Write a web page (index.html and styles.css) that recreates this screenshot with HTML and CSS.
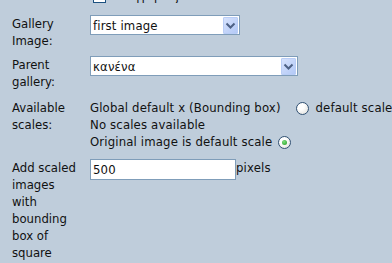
FILE: index.html
```html
<!doctype html>
<html>
<head>
    <meta charset="UTF-8">
    <title>Gallery image</title>
    <link rel="stylesheet" href="styles.css">
</head>
<body>
<div class="top">
    <span class="check"></span><span class="top_text">κατηγορίες</span>
</div>
<table class="form">
    <tr>
        <td class="label">Gallery Image:</td>
        <td>
            <div class="select sel_short">
                <span class="select_text">first image</span>
                <span class="select_btn"><svg width="15" height="17" viewBox="0 0 15 17"><polyline points="3.5,6.5 7.5,10.5 11.5,6.5" fill="none" stroke="#4d6185" stroke-width="2"/></svg></span>
            </div>
        </td>
    </tr>
    <tr class="row_parent">
        <td class="label">Parent gallery:</td>
        <td>
            <div class="select sel_long">
                <span class="select_text">κανένα</span>
                <span class="select_btn"><svg width="15" height="17" viewBox="0 0 15 17"><polyline points="3.5,6.5 7.5,10.5 11.5,6.5" fill="none" stroke="#4d6185" stroke-width="2"/></svg></span>
            </div>
        </td>
    </tr>
    <tr>
        <td class="label">Available scales:</td>
        <td class="scales">
            <div class="line">Global default x (Bounding box) <span class="radio"></span>default scale</div>
            <div class="line">No scales available</div>
            <div class="line">Original image is default scale <span class="radio checked"></span></div>
        </td>
    </tr>
    <tr>
        <td class="label">Add scaled images with bounding box of square</td>
        <td><span class="input">500</span>pixels</td>
    </tr>
</table>
</body>
</html>
```

FILE: styles.css
```css
html,body{overflow:hidden}
body{margin:0;background:#bfcddb;font-family:"DejaVu Sans Condensed","Liberation Sans",sans-serif;font-size:13px;line-height:17px;color:#111;letter-spacing:0.15px}
/* 顶部被裁掉的复选框 */
.top{height:13px;margin-top:-10px;padding-left:93px;display:flex;align-items:flex-end;gap:4px;white-space:nowrap}
.check{width:11px;height:11px;border:1px solid #1c5180;background:#fff;display:inline-block}
.top_text{line-height:13px;position:relative;top:-1px}
.form{border-collapse:collapse;margin:9px 0 0 10px;table-layout:fixed;width:380px}
.form td{padding:3px 2px 4px 2px;vertical-align:top}
.form td.label{width:70px;padding-right:6px;letter-spacing:0}
.row_parent td{padding-bottom:6px}
/* 下拉框 */
.select{height:20px;box-sizing:border-box;border:1px solid #7f9db9;background:#fff;display:flex;align-items:center;justify-content:space-between;padding:0 1px 0 2px}
.sel_short{width:150px}
.sel_long{width:208px}
.select_btn{width:15px;height:17px;box-sizing:border-box;border:1px solid #b9cdf6;border-radius:1px;background:linear-gradient(135deg,#d6e2fd,#b3c9f6);display:block}
.select_btn svg{display:block;margin:-1px}
.scales{white-space:nowrap}
.line{height:17px}
.line:last-child{height:19px}
/* 单选框 */
.radio{display:inline-block;width:11px;height:11px;border:1px solid #2f4f72;border-radius:50%;background:radial-gradient(circle at 35% 30%,#fff 30%,#dcdcd6 100%);vertical-align:-3px;margin:0 7px 0 11px;position:relative}
.radio.checked{margin-left:2px}
.radio.checked:after{content:"";position:absolute;left:3px;top:3px;width:5px;height:5px;border-radius:50%;background:radial-gradient(circle at 40% 35%,#7ee07e,#1f9a1f)}
.input{display:inline-block;width:146px;height:21px;box-sizing:border-box;border:1px solid #7f9db9;background:#fff;padding:1px 2px;vertical-align:top}
```
